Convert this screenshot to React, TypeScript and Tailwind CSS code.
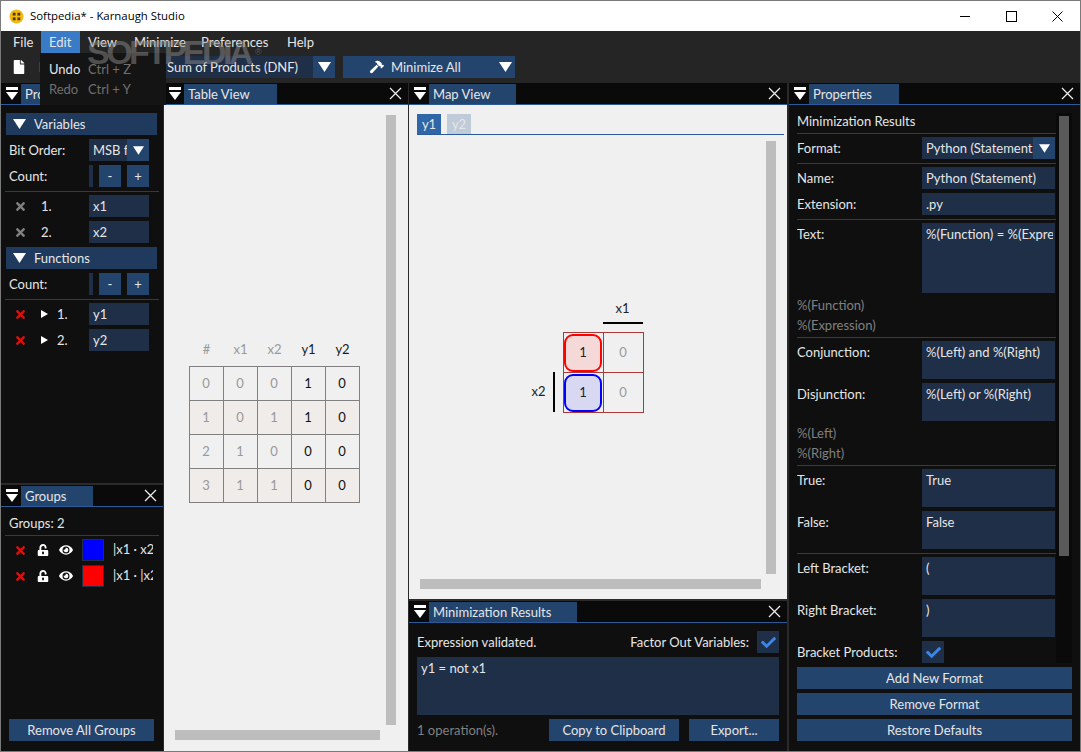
import type { ReactNode } from 'react';
import { FaCheck, FaEye, FaFile, FaHammer, FaSave, FaTimes, FaUnlockAlt } from 'react-icons/fa';

const Tri = ({ size = 'w-[13px] h-[10px]' }: { size?: string }) => (
  <svg viewBox="0 0 13 10" className={size}>
    <polygon points="0,0 13,0 6.5,10" fill="#fff" />
  </svg>
);

const DockToggle = () => (
  <svg viewBox="0 0 12 13" className="w-[12px] h-[13px]">
    <rect x="0" y="0" width="12" height="3" fill="#fff" />
    <polygon points="0,5 12,5 6,13" fill="#fff" />
  </svg>
);

const CloseX = () => (
  <svg viewBox="0 0 13 13" className="w-[13px] h-[13px]">
    <path d="M1 1 L12 12 M12 1 L1 12" stroke="#f0f0f0" strokeWidth="1.2" />
  </svg>
);

function DockHeader({ title, tabW, noClose }: { title: string; tabW: string; noClose?: boolean }) {
  return (
    <div className="h-[22px] shrink-0 bg-[#0a0a0a] border-b border-[#2a5a9a] flex items-end">
      <div className="w-[20px] h-[21px] flex items-center justify-center pl-[2px]">
        <DockToggle />
      </div>
      <div className={`${tabW} h-[20px] bg-[#23446d] pl-[4px] leading-[20px] text-[#e6e6e6] whitespace-nowrap overflow-hidden`}>{title}</div>
      <div className="flex-1" />
      {!noClose && (
        <div className="w-[13px] h-[21px] mr-[6px] flex items-center">
          <CloseX />
        </div>
      )}
    </div>
  );
}

const Btn = ({ children, cls }: { children: ReactNode; cls: string }) => (
  <div className={`h-[22px] bg-[#23446d] pt-px flex items-center justify-center text-[#e6e6e6] ${cls}`}>{children}</div>
);

const Field = ({ children, cls }: { children?: ReactNode; cls: string }) => (
  <div className={`bg-[#1f2f48] pl-[4px] leading-[22px] text-[#e6e6e6] whitespace-nowrap overflow-hidden ${cls}`}>{children}</div>
);

const Sep = ({ cls = '' }: { cls?: string }) => <div className={`h-px bg-[#3a3a3a] ${cls}`} />;

const Section = ({ title }: { title: string }) => (
  <div className="h-[22px] ml-[5px] mr-[6px] bg-[#1f3a5c] flex items-center pl-[7px] text-[#e6e6e6]">
    <Tri />
    <span className="ml-[8px] pt-px">{title}</span>
  </div>
);

const Check = () => (
  <div className="w-[22px] h-[22px] bg-[#1f2f48] flex items-center justify-center">
    <FaCheck className="text-[#3b86e8] text-[15px]" />
  </div>
);

function VarRow({ n, name, active, arrow }: { n: string; name: string; active?: boolean; arrow?: boolean }) {
  return (
    <div className="h-[22px] flex items-center">
      <FaTimes className={`ml-[13px] text-[13px] ${active ? 'text-[#ff0000]' : 'text-[#808080]'}`} />
      {arrow ? (
        <>
          <svg viewBox="0 0 7 8" className="w-[7px] h-[8px] ml-[14px]"><polygon points="0,0 7,4 0,8" fill="#fff" /></svg>
          <span className="w-[32px] ml-[9px] pt-px text-[#e6e6e6]">{n}</span>
        </>
      ) : (
        <span className="w-[48px] ml-[14px] pt-px text-[#e6e6e6]">{n}</span>
      )}
      <Field cls="w-[60px] h-[22px]">{name}</Field>
    </div>
  );
}

function CountRow() {
  return (
    <div className="h-[22px] flex items-center">
      <span className="w-[80px] ml-[8px] pt-px text-[#e6e6e6]">Count:</span>
      <div className="w-[4px] h-[22px] bg-[#1f2f48]" />
      <Btn cls="w-[22px] ml-[6px]">-</Btn>
      <Btn cls="w-[22px] ml-[6px]">+</Btn>
    </div>
  );
}

function GroupRow({ color, label }: { color: string; label: string }) {
  return (
    <div className="h-[22px] flex items-center">
      <FaTimes className="ml-[13px] text-[13px] text-[#ff0000]" />
      <FaUnlockAlt className="ml-[10px] text-[12px] text-white" />
      <FaEye className="ml-[10px] text-[14px] text-white" />
      <div className={`w-[22px] h-[22px] ml-[9px] border border-[#1f2f48] ${color}`} />
      <span className="ml-[9px] w-[40px] overflow-hidden whitespace-nowrap text-[#e6e6e6]">{label}</span>
    </div>
  );
}

const tableRows = [
  ['0', '0', '0', '1', '0'],
  ['1', '0', '1', '1', '0'],
  ['2', '1', '0', '0', '0'],
  ['3', '1', '1', '0', '0'],
];

function TruthTable() {
  return (
    <div className="mr-[7px] mt-[2px]">
      <div className="flex h-[26px] ml-px">
        {['#', 'x1', 'x2', 'y1', 'y2'].map((h, i) => (
          <div key={h} className={`w-[34px] text-center leading-[18px] ${i < 3 ? 'text-[#999999]' : 'text-[#1a1a1a]'}`}>{h}</div>
        ))}
      </div>
      <div className="border-t border-l border-[#808080]">
        {tableRows.map((row, r) => (
          <div key={r} className={`flex ${r % 2 ? 'bg-[#f0ecea]' : ''}`}>
            {row.map((c, i) => (
              <div
                key={i}
                className={`w-[34px] h-[34px] pt-px border-r border-b border-[#808080] flex items-center justify-center ${i < 3 ? 'text-[#999999]' : 'text-[#111111]'}`}
              >
                {c}
              </div>
            ))}
          </div>
        ))}
      </div>
    </div>
  );
}

function KarnaughMap() {
  return (
    <div className="mr-[8px] mb-[4px] text-[#222222]">
      <div className="flex">
        <div className="w-[73px]" />
        <div className="w-[40px] h-[34px] border-b-2 border-black text-center leading-[20px] mt-[-8px] pt-[8px]">x1</div>
      </div>
      <div className="flex mt-[8px]">
        <div className="w-[33px] h-[80px] flex flex-col justify-end">
          <div className="h-[40px] flex items-center">
            <span className="w-[16px] text-right">x2</span>
            <div className="w-[2px] h-[40px] bg-black ml-[7px]" />
          </div>
        </div>
        <div className="w-[81px] grid grid-cols-2 border-t border-l border-[#a83a3a]">
          <div className="h-[40px] border-r border-b border-[#a83a3a] flex items-center justify-center">
            <div className="w-[38px] h-[38px] rounded-[9px] border-2 border-[#ff0000] bg-[#f5d8d8] flex items-center justify-center">1</div>
          </div>
          <div className="h-[40px] border-r border-b border-[#a83a3a] flex items-center justify-center text-[#999999]">0</div>
          <div className="h-[40px] border-r border-b border-[#a83a3a] flex items-center justify-center">
            <div className="w-[38px] h-[38px] rounded-[9px] border-2 border-[#0000ff] bg-[#d8d8f2] flex items-center justify-center">1</div>
          </div>
          <div className="h-[40px] border-r border-b border-[#a83a3a] flex items-center justify-center text-[#999999]">0</div>
        </div>
      </div>
    </div>
  );
}

function PropRow({ label, h = 'h-[22px]', children }: { label: string; h?: string; children: ReactNode }) {
  return (
    <div className="flex">
      <span className="w-[125px] leading-[22px] text-[#e6e6e6] whitespace-nowrap">{label}</span>
      <Field cls={`w-[133px] ${h}`}>{children}</Field>
    </div>
  );
}

const Hint = ({ children }: { children: ReactNode }) => <div className="h-[20px] leading-[20px] text-[#808080]">{children}</div>;

export default function App() {
  return (
    <div className="relative w-[1081px] h-[752px] overflow-hidden border border-[#7a7a7a] bg-[#2a2a2a] flex flex-col text-[13px] font-['Lato','Noto_Sans',sans-serif]">
      {/* title bar */}
      <div className="h-[30px] shrink-0 bg-white flex items-center text-[11.4px] text-black font-['Open_Sans',sans-serif]">
        <svg viewBox="0 0 16 16" className="w-[15px] h-[15px] ml-[8px]">
          <circle cx="8" cy="8" r="7.5" fill="#f5b90f" />
          <rect x="4" y="4" width="3" height="3" fill="#4a3a10" />
          <rect x="9" y="4" width="3" height="3" fill="#4a3a10" />
          <rect x="4" y="9" width="3" height="3" fill="#4a3a10" />
          <rect x="9" y="9" width="3" height="3" fill="#4a3a10" />
        </svg>
        <span className="ml-[6px]">Softpedia* - Karnaugh Studio</span>
        <div className="flex-1" />
        <div className="w-[46px] flex justify-center"><div className="w-[10px] h-px bg-black" /></div>
        <div className="w-[46px] flex justify-center"><div className="w-[11px] h-[11px] border border-black" /></div>
        <div className="w-[46px] flex justify-center">
          <svg viewBox="0 0 11 11" className="w-[11px] h-[11px]"><path d="M0.5 0.5 L10.5 10.5 M10.5 0.5 L0.5 10.5" stroke="#000" strokeWidth="1" /></svg>
        </div>
      </div>

      {/* menu bar */}
      <div className="h-[22px] shrink-0 bg-[#252525] flex items-center pl-[4px] text-[#e6e6e6]">
        <span className="px-[8px] leading-[22px] w-[36px]">File</span>
        <span className="px-[8px] leading-[22px] w-[39px] bg-[#3a7bc8]">Edit</span>
        <span className="px-[8px] leading-[22px] w-[46px]">View</span>
        <span className="px-[8px] leading-[22px] w-[67px] whitespace-nowrap">Minimize</span>
        <span className="px-[8px] leading-[22px] w-[86px]">Preferences</span>
        <span className="px-[8px] leading-[22px]">Help</span>
      </div>

      {/* toolbar */}
      <div className="h-[30px] shrink-0 bg-[#252525] flex items-start pt-[3px] text-[#e6e6e6]">
        <FaFile className="ml-[11px] mt-[4px] text-white text-[14px]" />
        <FaSave className="ml-[13px] mt-[4px] text-white text-[14px]" />
        <div className="w-[153px] ml-[107px] h-[22px] bg-[#1f2f48] pl-[7px] leading-[22px] whitespace-nowrap">Sum of Products (DNF)</div>
        <div className="w-[22px] h-[22px] bg-[#23446d] flex items-center justify-center"><Tri /></div>
        <div className="w-[172px] ml-[8px] h-[22px] bg-[#23446d] flex items-center">
          <FaHammer className="ml-[27px] text-white text-[14px]" />
          <span className="ml-[7px] pt-px flex-1">Minimize All</span>
          <div className="mr-[3px]"><Tri /></div>
        </div>
      </div>

      {/* dock area */}
      <div className="flex-1 min-h-0 flex gap-px">
        {/* left column */}
        <div className="w-[162px] shrink-0 flex flex-col gap-[2px]">
          <div className="flex-1 min-h-0 bg-[#0f0f0f] flex flex-col">
            <DockHeader title="Properties" tabW="w-[122px]" noClose />
            <div className="pt-[8px] flex flex-col gap-[4px]">
              <Section title="Variables" />
              <div className="h-[22px] flex items-center">
                <span className="w-[80px] ml-[8px] pt-px text-[#e6e6e6]">Bit Order:</span>
                <Field cls="w-[38px] h-[22px]">MSB f</Field>
                <div className="w-[22px] h-[22px] bg-[#23446d] flex items-center justify-center"><Tri size="w-[11px] h-[9px]" /></div>
              </div>
              <CountRow />
              <Sep cls="mx-[4px] -mb-[1px]" />
              <VarRow n="1." name="x1" />
              <VarRow n="2." name="x2" />
              <Section title="Functions" />
              <CountRow />
              <Sep cls="mx-[4px] -mb-[1px]" />
              <VarRow n="1." name="y1" active arrow />
              <VarRow n="2." name="y2" active arrow />
            </div>
          </div>
          <div className="h-[266px] shrink-0 bg-[#0f0f0f] flex flex-col">
            <DockHeader title="Groups" tabW="w-[72px]" />
            <div className="h-[28px] ml-[8px] leading-[32px] text-[#e6e6e6]">Groups: 2</div>
            <Sep cls="mx-[4px]" />
            <div className="mt-[3px] flex flex-col gap-[4px]">
              <GroupRow color="bg-[#0000ff]" label="|x1 · x2" />
              <GroupRow color="bg-[#ff0000]" label="|x1 · |x2" />
            </div>
            <div className="flex-1" />
            <Btn cls="w-[145px] ml-[8px] mb-[10px]">Remove All Groups</Btn>
          </div>
        </div>

        {/* table view */}
        <div className="w-[244px] shrink-0 bg-[#f0f0f0] flex flex-col">
          <DockHeader title="Table View" tabW="w-[93px]" />
          <div className="flex-1 min-h-0 grid grid-cols-[1fr_10px] grid-rows-[1fr_10px] gap-x-[6px] gap-y-[5px] pt-[10px] pl-[11px] pr-[12px] pb-[11px]">
            <div className="flex items-center justify-center"><TruthTable /></div>
            <div className="bg-[#bdbdbd]" />
            <div className="bg-[#bdbdbd]" />
          </div>
        </div>

        {/* center column */}
        <div className="w-[378px] shrink-0 flex flex-col gap-[2px]">
          <div className="flex-1 min-h-0 bg-[#f0f0f0] flex flex-col">
            <DockHeader title="Map View" tabW="w-[87px]" />
            <div className="pt-[9px] pl-[8px] pr-[3px]">
              <div className="flex gap-[6px] border-b border-[#2a5a9a]">
                <div className="w-[24px] h-[20px] bg-[#2f66a8] text-center leading-[20px] text-[#e6e6e6]">y1</div>
                <div className="w-[24px] h-[20px] bg-[#bfcbd8] text-center leading-[20px] text-[#e6e6e6]">y2</div>
              </div>
            </div>
            <div className="flex-1 min-h-0 grid grid-cols-[1fr_10px] grid-rows-[1fr_10px] gap-x-[5px] gap-y-[5px] pt-[6px] pl-[11px] pr-[11px] pb-[10px]">
              <div className="flex items-center justify-center"><KarnaughMap /></div>
              <div className="bg-[#bdbdbd]" />
              <div className="bg-[#bdbdbd]" />
            </div>
          </div>
          <div className="h-[150px] shrink-0 bg-[#0f0f0f] flex flex-col">
            <DockHeader title="Minimization Results" tabW="w-[148px]" />
            <div className="px-[8px] pt-[8px] flex flex-col gap-[4px] text-[#e6e6e6]">
              <div className="flex items-center justify-between">
                <span className="pt-px">Expression validated.</span>
                <div className="flex items-center gap-[8px]">
                  <span className="pt-px">Factor Out Variables:</span>
                  <Check />
                </div>
              </div>
              <div className="h-[58px] bg-[#1f2f48] px-[4px] leading-[22px]">y1 = not x1</div>
              <div className="flex items-center">
                <span className="text-[#808080] pt-px flex-1">1 operation(s).</span>
                <Btn cls="w-[130px]">Copy to Clipboard</Btn>
                <Btn cls="w-[90px] ml-[10px]">Export...</Btn>
              </div>
            </div>
          </div>
        </div>

        {/* properties */}
        <div className="flex-1 min-w-0 ml-px bg-[#0f0f0f] flex flex-col">
          <DockHeader title="Properties" tabW="w-[90px]" />
          <div className="flex-1 min-h-0 pl-[8px] pr-[8px] pt-[8px] flex flex-col">
            <div className="h-[550px] shrink-0 flex">
              <div className="w-[259px] h-[550px] overflow-hidden flex flex-col gap-[4px] text-[#e6e6e6] [&>*]:shrink-0">
                <div className="h-[16px] leading-[16px]">Minimization Results</div>
                <Sep cls="-mb-[1px]" />
                <PropRow label="Format:"><div className="flex -ml-[4px] pl-[4px] relative">Python (Statement<div className="absolute right-0 top-0 w-[22px] h-[22px] bg-[#23446d] flex items-center justify-center"><Tri size="w-[11px] h-[9px]" /></div></div></PropRow>
                <Sep cls="-mb-[1px]" />
                <PropRow label="Name:">Python (Statement)</PropRow>
                <PropRow label="Extension:">.py</PropRow>
                <Sep cls="-mb-[1px]" />
                <PropRow label="Text:" h="h-[70px]"><span className="block w-[127px] overflow-hidden">%(Function) = %(Expression)</span></PropRow>
                <div className="-my-[2px]">
                  <Hint>%(Function)</Hint>
                  <Hint>%(Expression)</Hint>
                </div>
                <Sep cls="-mb-[1px]" />
                <PropRow label="Conjunction:" h="h-[38px]">%(Left) and %(Right)</PropRow>
                <PropRow label="Disjunction:" h="h-[38px]">%(Left) or %(Right)</PropRow>
                <div className="-my-[2px]">
                  <Hint>%(Left)</Hint>
                  <Hint>%(Right)</Hint>
                </div>
                <Sep cls="-mb-[1px]" />
                <PropRow label="True:" h="h-[38px]">True</PropRow>
                <PropRow label="False:" h="h-[38px]">False</PropRow>
                <Sep cls="-mb-[1px]" />
                <PropRow label="Left Bracket:" h="h-[38px]">(</PropRow>
                <PropRow label="Right Bracket:" h="h-[38px]">)</PropRow>
                <div className="flex">
                  <span className="w-[125px] leading-[22px]">Bracket Products:</span>
                  <Check />
                </div>
              </div>
              <div className="w-[16px] h-[550px] bg-[#0a0a0a] pl-[3px] pr-[3px] pt-[3px]">
                <div className="h-[440px] bg-[#5a5a5a]" />
              </div>
            </div>
            <div className="mt-[4px] flex flex-col gap-[4px]">
              <Btn cls="w-[275px]">Add New Format</Btn>
              <Btn cls="w-[275px]">Remove Format</Btn>
              <Btn cls="w-[275px]">Restore Defaults</Btn>
            </div>
          </div>
        </div>
      </div>

      {/* edit menu popup */}
      <div className="absolute left-[39px] top-[52px] w-[126px] h-[52px] bg-[#141414] px-[9px] pt-[6px]">
        <div className="flex h-[20px] leading-[20px]"><span className="w-[39px] text-[#e6e6e6]">Undo</span><span className="text-[#707070]">Ctrl + Z</span></div>
        <div className="flex h-[20px] leading-[20px] text-[#707070]"><span className="w-[39px]">Redo</span><span>Ctrl + Y</span></div>
      </div>

      {/* watermark */}
      <div className="absolute left-[86px] top-[29px] text-[34px] font-bold leading-[44px] tracking-[-3.5px] text-[#8a8a8a]/50 font-['Liberation_Sans',sans-serif] pointer-events-none whitespace-nowrap">SOFTPEDIA<span className="text-[9px] align-top ml-[5px] tracking-normal font-normal">®</span></div>
    </div>
  );
}
